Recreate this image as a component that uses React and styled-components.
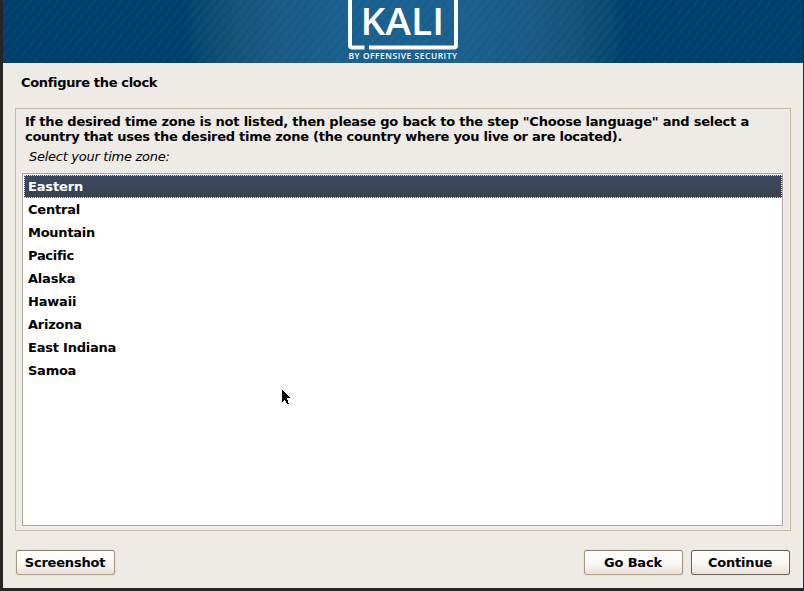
import React from "react";
import styled, { createGlobalStyle } from "styled-components";

const GlobalStyle = createGlobalStyle`
  * { box-sizing: border-box; }
  body { margin: 0; background: #262626; overflow: hidden; }
`;

const Screen = styled.div`
  position: relative;
  width: 804px;
  height: 591px;
  padding: 0 1px 3px 3px;
  background: #262626;
  font-family: "DejaVu Sans", sans-serif;
  font-size: 13px;
  font-weight: bold;
  line-height: 15px;
  color: #000;
`;

const Installer = styled.main`
  display: flex;
  flex-direction: column;
  height: 588px;
  background: #eeebe6;
`;

const Banner = styled.header`
  display: flex;
  justify-content: center;
  flex: 0 0 63px;
  background:
    repeating-linear-gradient(130deg, rgba(30, 135, 145, 0.11) 0 2px, rgba(0, 60, 115, 0.03) 4px 5px, rgba(30, 135, 145, 0.11) 7px),
    radial-gradient(circle 222px at 402px 22px, #1b6094 0%, #1b5e8e 35%, #1b5783 62%, #165078 78%, #094770 92%, #003c6c 100%);
`;

const Logo = styled.svg`
  display: block;
  width: 126px;
  height: 63px;
`;

const Title = styled.h1`
  margin: 12px 0 18px 18px;
  font-size: 13px;
  line-height: 15px;
  letter-spacing: -0.33px;
`;

const Panel = styled.section`
  display: flex;
  flex-direction: column;
  height: 423px;
  margin: 0 12px;
  padding: 5px 7px 4px 6px;
  border: 1px solid #c5b9a8;
`;

const Description = styled.p`
  margin: 0 0 0 3px;
  letter-spacing: -0.215px;
  white-space: nowrap;
`;

const DescriptionEnd = styled.span`
  letter-spacing: -0.265px;
`;

const Prompt = styled.p`
  margin: 5px 0 9px 7px;
  letter-spacing: -0.27px;
  font-weight: normal;
  font-style: italic;
`;

const ZoneList = styled.ul`
  flex: 1;
  margin: 0;
  padding: 1px 0 0 1px;
  border: 1px solid #b0a596;
  background: #fff;
  box-shadow: 0 0 0 1px #f4f1ed;
  list-style: none;
`;

const Zone = styled.li`
  height: 23px;
  padding: 3px 3px;
  border: 1px dotted ${({ $selected }) => ($selected ? "#dfe3e8" : "transparent")};
  background: ${({ $selected }) => ($selected ? "linear-gradient(#3b475d, #39465c 48%, #384452 60%, #3b444f)" : "transparent")};
  color: ${({ $selected }) => ($selected ? "#fff" : "#000")};
  letter-spacing: ${({ $spacing }) => $spacing}px;
`;

const Actions = styled.footer`
  display: flex;
  gap: 8px;
  margin: 19px 13px 0;
`;

const Button = styled.button`
  width: 99px;
  height: 25px;
  padding: 0 1px 1px 0;
  margin-right: ${({ $leading }) => ($leading ? "auto" : "0")};
  border: 1px solid;
  border-color: ${({ $primary }) => ($primary ? "#6c6059 #73635a #6f6158" : "#8d7e70 #a8957f #b5a18c")};
  border-radius: 3px;
  background: linear-gradient(#fff, #faf8f7 50%, #f1ebe7 80%, #e9e0dc);
  box-shadow: 0 0 0 1px #e8e3dc;
  font: inherit;
  letter-spacing: -0.2px;
  color: #000;
`;

const Pointer = styled.svg`
  position: absolute;
  left: 282px;
  top: 390px;
  width: 9px;
  height: 15px;
`;

const zones = [
  { name: "Eastern", spacing: -0.15 },
  { name: "Central", spacing: -0.22 },
  { name: "Mountain", spacing: -0.25 },
  { name: "Pacific", spacing: -0.3 },
  { name: "Alaska", spacing: -0.2 },
  { name: "Hawaii", spacing: -0.2 },
  { name: "Arizona", spacing: -0.25 },
  { name: "East Indiana", spacing: -0.22 },
  { name: "Samoa", spacing: -0.25 },
];

export default function App() {
  return (
    <>
      <GlobalStyle />
      <Screen>
        <Installer>
          <Banner>
            <Logo viewBox="340 0 126 63" aria-label="Kali by Offensive Security">
              <g fill="none" stroke="#fff" strokeWidth="4">
                <path d="M350 0V45Q350 47.500 352.500 47.500H364.500" />
                <path d="M369 47.500H453.500Q456 47.500 456 45V0" />
              </g>
              <g fill="#fff" fontFamily="Open Sans, sans-serif">
                <text x="360.500" y="35" fontSize="38" fontWeight="600" textLength="83.500" lengthAdjust="spacingAndGlyphs">KALI</text>
                <text x="348.500" y="58.700" fontSize="8.400" fontWeight="600" textLength="108.500" lengthAdjust="spacing">BY OFFENSIVE SECURITY</text>
              </g>
            </Logo>
          </Banner>
          <Title>Configure the clock</Title>
          <Panel>
            <Description>
              If the desired time zone is not listed, then please go back to the step "Choose language" and select a
              <br />
              <DescriptionEnd>country that uses the desired time zone (the country where you live or are located).</DescriptionEnd>
            </Description>
            <Prompt>Select your time zone:</Prompt>
            <ZoneList>
              {zones.map(({ name, spacing }, i) => (
                <Zone key={name} $selected={i === 0} $spacing={spacing}>{name}</Zone>
              ))}
            </ZoneList>
          </Panel>
          <Actions>
            <Button $leading>Screenshot</Button>
            <Button>Go Back</Button>
            <Button $primary>Continue</Button>
          </Actions>
        </Installer>
        <Pointer viewBox="0 0 9 15" shapeRendering="crispEdges">
          <path d="M0 0L8 8H5L7 14H5L3 9.500L0 12Z" fill="#000" />
        </Pointer>
      </Screen>
    </>
  );
}
